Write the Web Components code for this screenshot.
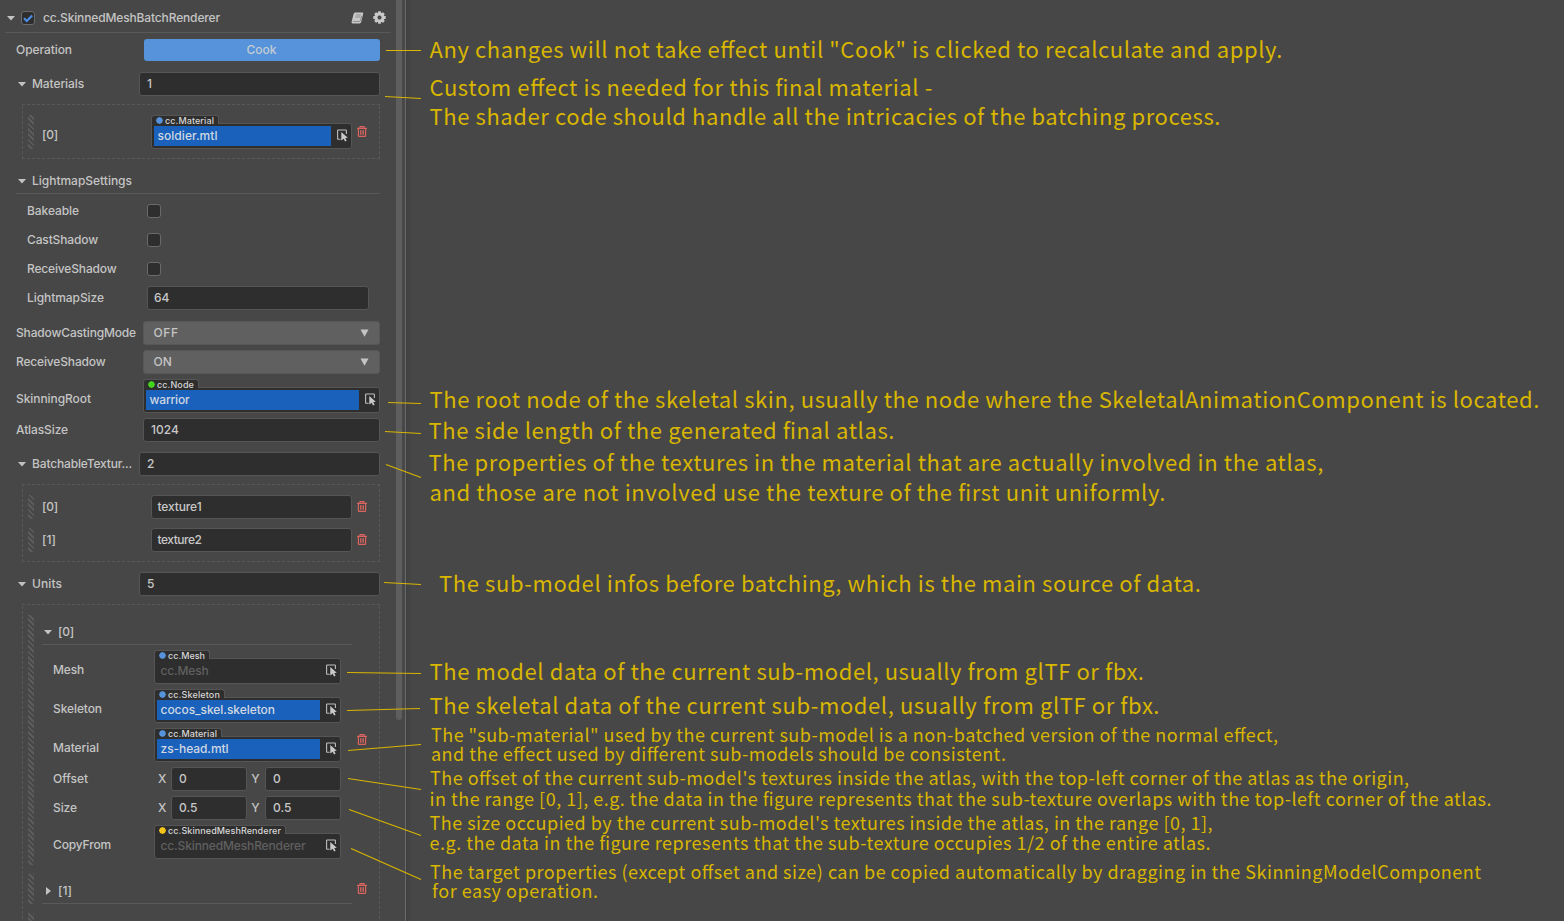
<!DOCTYPE html>
<html lang="en">
<head>
<meta charset="utf-8">
<title>cc.SkinnedMeshBatchRenderer</title>
<style>
html,body{margin:0;background:#474747;overflow:hidden}
body{width:1564px;height:921px;font:450 12px/16px Inter,"Liberation Sans",sans-serif;color:#c4c4c4}
</style>
</head>
<body>
<inspector-page></inspector-page>
<script>
const define = (name, html, setup) => customElements.define(name, class extends HTMLElement {
  connectedCallback() {
    if (this.shadowRoot) return;
    const root = this.attachShadow({mode: 'open'});
    const t = document.createElement('template');
    t.innerHTML = typeof html === 'function' ? html(this) : html;
    root.append(t.content.cloneNode(true));
    if (setup) setup(this, root);
  }
});

/* whole page: inspector on the left, notes on the right, connectors over both */
define('inspector-page', `
<style>
:host{display:flex;position:relative;width:1564px;height:921px;overflow:hidden;background:#474747}
</style>
<inspector-panel></inspector-panel>
<inspector-notes></inspector-notes>
<note-connectors></note-connectors>`);

define('inspector-panel', `
<style>
:host{display:flex;width:406px;height:921px;overflow:hidden;box-sizing:border-box;border-right:1px solid #6a6a6a;flex:none}
main{width:380px;flex:none;box-sizing:border-box}
header{display:flex;align-items:center;height:32px;width:386px;margin-left:5px;box-sizing:content-box;border-bottom:1px solid #595959}
header tri-arrow{margin:3px 5px 0 1px}
header check-box{margin:4px 8px 0 0}
header fit-text{margin-top:3px}
header book-icon{margin:4px 9px 0 auto}
header gear-icon{margin:3px 5px 0 0}
.track{margin-left:16px;width:6px;height:720px;background:#5e5e5e;border-radius:0 0 3px 3px}
.button{height:22px;background:#5693da;border-radius:3px;display:flex;justify-content:center;align-items:center;color:#c3cbd4;margin:0 .5px}
.list{margin:8px 0 0 22px;width:358px;box-sizing:border-box;border:0;
 background:
 repeating-linear-gradient(90deg,#595959 0 3px,transparent 3px 5px) 0 0/100% 1px no-repeat,
 repeating-linear-gradient(90deg,#595959 0 3px,transparent 3px 5px) 0 100%/100% 1px no-repeat,
 repeating-linear-gradient(0deg,#595959 0 3px,transparent 3px 5px) 0 0/1px 100% no-repeat,
 repeating-linear-gradient(0deg,#595959 0 3px,transparent 3px 5px) 100% 0/1px 100% no-repeat;
 display:flex;flex-direction:column}
.item{display:flex}
.unit{width:310px;margin-left:8px}
.rule{height:1px;background:#595959}
</style>
<main>
<header><tri-arrow></tri-arrow><check-box checked></check-box><fit-text w="177">cc.SkinnedMeshBatchRenderer</fit-text><book-icon></book-icon><gear-icon></gear-icon></header>
<prop-row style="--mt:5px" label="Operation" w="56"><div class="button"><fit-text w="30">Cook</fit-text></div></prop-row>
<prop-row style="--mt:10px;--c:139px" arrow label="Materials" w="52"><text-field>1</text-field></prop-row>
<div class="list" style="height:55px">
 <div class="item" style="margin-top:11px"><drag-handle style="--h:34px;margin-left:6px"></drag-handle>
  <prop-row style="--x:8px;--c:117px;--h:34px;--rw:318px;--lt:5px" label="[0]" w="16"><asset-field tag="cc.Material" tw="49" w="60" kind="asset">soldier.mtl</asset-field></prop-row><trash-icon style="margin:11px 0 0 5px"></trash-icon></div>
</div>
<prop-row style="--mt:10px" arrow label="LightmapSettings" w="100"></prop-row>
<div class="rule" style="margin-left:16px"></div>
<prop-row style="--mt:5px;--x:27px;--c:147px" label="Bakeable" w="52"><check-box></check-box></prop-row>
<prop-row style="--mt:5px;--x:27px;--c:147px" label="CastShadow" w="71"><check-box></check-box></prop-row>
<prop-row style="--mt:5px;--x:27px;--c:147px" label="ReceiveShadow" w="89.5"><check-box></check-box></prop-row>
<prop-row style="--mt:5px;--x:27px;--c:147px;--rw:369px" label="LightmapSize" w="77"><text-field style="--pad:6px">64</text-field></prop-row>
<prop-row style="--mt:11px" label="ShadowCastingMode" w="120"><select-field w="25">OFF</select-field></prop-row>
<prop-row style="--mt:5px" label="ReceiveShadow" w="89.5"><select-field w="18.5">ON</select-field></prop-row>
<prop-row style="--mt:5px;--h:34px;--lt:5px" label="SkinningRoot" w="75"><asset-field tag="cc.Node" tw="37" w="40" kind="node">warrior</asset-field></prop-row>
<prop-row style="--mt:5px" label="AtlasSize" w="52"><text-field>1024</text-field></prop-row>
<prop-row style="--mt:10px;--c:139px" arrow label="BatchableTextur..." w="100"><text-field>2</text-field></prop-row>
<div class="list" style="height:78px">
 <div class="item" style="margin-top:11px"><drag-handle style="--h:24px;margin-left:6px"></drag-handle>
  <prop-row style="--x:8px;--c:117px;--rw:318px" label="[0]" w="16"><text-field w="44">texture1</text-field></prop-row><trash-icon style="margin:6px 0 0 5px"></trash-icon></div>
 <div class="item" style="margin-top:9px"><drag-handle style="--h:24px;margin-left:6px"></drag-handle>
  <prop-row style="--x:8px;--c:117px;--rw:318px" label="[1]" w="14"><text-field w="44">texture2</text-field></prop-row><trash-icon style="margin:6px 0 0 5px"></trash-icon></div>
</div>
<prop-row style="--mt:10px;--c:139px" arrow label="Units" w="30"><text-field>5</text-field></prop-row>
<div class="list" style="height:330px">
 <div class="item" style="margin-top:11px"><drag-handle style="--h:250px;margin-left:6px"></drag-handle>
  <div class="unit">
   <prop-row style="--x:0px;--mt:5px" arrow label="[0]" w="16"></prop-row>
   <div class="rule"></div>
   <prop-row style="--mt:5px;--x:11px;--c:112px;--rw:299px;--h:34px;--lt:6px" label="Mesh" w="31"><asset-field empty tag="cc.Mesh" tw="37" w="48" kind="asset">cc.Mesh</asset-field></prop-row>
   <prop-row style="--mt:5px;--x:11px;--c:112px;--rw:299px;--h:34px;--lt:6px" label="Skeleton" w="49"><asset-field tag="cc.Skeleton" tw="52" w="114.5" kind="asset">cocos_skel.skeleton</asset-field></prop-row>
   <prop-row style="--mt:5px;--x:11px;--c:112px;--rw:299px;--h:34px;--lt:6px" label="Material" w="46"><asset-field tag="cc.Material" tw="49" w="68" kind="asset">zs-head.mtl</asset-field></prop-row>
   <prop-row style="--mt:5px;--x:11px;--c:116px;--rw:299px" label="Offset" w="35"><vector-field x="0" y="0"></vector-field></prop-row>
   <prop-row style="--mt:5px;--x:11px;--c:116px;--rw:299px" label="Size" w="24"><vector-field x="0.5" y="0.5"></vector-field></prop-row>
   <prop-row style="--mt:5px;--x:11px;--c:112px;--rw:299px;--h:34px;--lt:6px" label="CopyFrom" w="58"><asset-field empty tag="cc.SkinnedMeshRenderer" tw="113" w="145" kind="component">cc.SkinnedMeshRenderer</asset-field></prop-row>
  </div><trash-icon style="margin:119px 0 0 5px"></trash-icon></div>
 <div class="item" style="margin-top:9px"><drag-handle style="--h:30px;margin-left:6px"></drag-handle>
  <div class="unit"><prop-row style="--x:0px;--mt:5px" arrow closed label="[1]" w="14"></prop-row><div class="rule"></div></div><trash-icon style="margin:9px 0 0 5px"></trash-icon></div>
 <div class="item" style="margin-top:9px"><drag-handle style="--h:20px;margin-left:6px"></drag-handle></div>
</div>
</main>
<div class="track"></div>`);

/* label at --x, control from --c to --rw */
define('prop-row', el => `
<style>
:host{display:grid;grid-template-columns:calc(var(--c,143px) - var(--x,16px)) 1fr;align-items:center;
 box-sizing:border-box;width:var(--rw,380px);height:var(--h,24px);margin-top:var(--mt,0);padding-left:var(--x,16px)}
.label{display:flex;align-items:center;white-space:nowrap;padding-top:var(--lt,0)}
tri-arrow{margin:0 5px 0 1px}
</style>
<div class="label">${el.hasAttribute('arrow') ? `<tri-arrow ${el.hasAttribute('closed') ? 'closed' : ''}></tri-arrow>` : ''}<fit-text w="${el.getAttribute('w')}">${el.getAttribute('label')}</fit-text></div>
<slot></slot>`);

define('text-field', el => `
<style>
:host{display:flex;align-items:center;box-sizing:border-box;height:24px;background:#2e2e2e;border:1px solid #555;border-radius:3px;padding-left:var(--pad,7px);color:#c8c8c8;flex:1;min-width:0}
:host([w]){--pad:5.5px}
</style>
${el.hasAttribute('w') ? `<fit-text w="${el.getAttribute('w')}">${el.textContent}</fit-text>` : '<slot></slot>'}`);

define('vector-field', el => `
<style>
:host{display:flex;align-items:center}
span{width:13px}
span.y{width:9px;margin:0 5px 0 4px;text-align:center}
text-field{flex:1}
</style>
<span>X</span><text-field>${el.getAttribute('x')}</text-field><span class="y">Y</span><text-field>${el.getAttribute('y')}</text-field>`);

define('select-field', el => `
<style>
:host{display:flex;align-items:center;justify-content:space-between;box-sizing:border-box;height:24px;background:#606060;border:1px solid #575757;border-radius:3px;padding:0 10px 0 9.5px}
</style>
<fit-text w="${el.getAttribute('w')}">${el.textContent}</fit-text>
<svg width="9" height="8" viewBox="0 0 9 8"><path d="M.5 .5h8L4.5 7.8z" fill="#c4c4c4"/></svg>`);

define('check-box', el => `
<style>
:host{display:block;box-sizing:border-box;width:14px;height:14px;background:#2e2e2e;border:1px solid #6a6a6a;border-radius:3px}
svg{display:block}
</style>
${el.hasAttribute('checked') ? '<svg width="12" height="12" viewBox="0 0 12 12"><path d="M2 6.2l2.8 2.8L10.2 3.4" fill="none" stroke="#4a8ee6" stroke-width="2.1"/></svg>' : ''}`);

define('tri-arrow', el => `
<style>:host{display:block;width:10px;height:10px;flex:none}svg{display:block}</style>
<svg width="10" height="10" viewBox="0 0 10 10"><path d="${el.hasAttribute('closed') ? 'M3 1L8 5L3 9z' : 'M1 3h8L5 7.5z'}" fill="#c2c2c2"/></svg>`);

define('drag-handle', `
<style>:host{display:block;width:6px;height:var(--h);flex:none;background:repeating-linear-gradient(45deg,#474747 0 1.9px,#5b5b5b 1.9px 3.8px)}</style>`);

/* asset reference: type tag sits on top of the value box */
define('asset-field', el => {
  const colour = {asset: '#5693da', node: '#43d41c', component: '#f5c518'}[el.getAttribute('kind')];
  return `
<style>
:host{display:flex;flex-direction:column;align-items:flex-start;height:34px;width:100%}
.tag{display:flex;align-items:center;box-sizing:border-box;height:9px;background:#2e2e2e;border:1px solid #555;border-bottom:0;border-radius:3px 3px 0 0;font-size:9px;line-height:9px;padding:1px 4px 0 4px;gap:2px;margin-bottom:-1px;z-index:1;color:#d6d6d6}
.box{display:flex;align-items:center;box-sizing:border-box;width:100%;height:26px;background:#2e2e2e;border:1px solid #555;border-radius:0 3px 3px 3px;padding:1px 3px 2px 2px}
.value{flex:1;height:20px;display:flex;align-items:center;padding-left:3.5px;margin-right:6px;background:#1a61bb;color:#d0d8e2}
:host([empty]) .value{background:none;color:#606060}
svg{display:block;flex:none}
</style>
<div class="tag"><svg width="7" height="7" viewBox="0 0 7 7"><path d="M3.5 0L5.9 1.1L7 3.5L5.9 5.9L3.5 7L1.1 5.9L0 3.5L1.1 1.1z" fill="${colour}"/></svg><fit-text w="${el.getAttribute('tw')}">${el.getAttribute('tag')}</fit-text></div>
<div class="box"><div class="value"><fit-text w="${el.getAttribute('w')}">${el.textContent}</fit-text></div>
<svg width="11" height="13" viewBox="0 0 11 13"><path d="M3.6 10.3H1.2Q.6 10.3 .6 9.7V1.6Q.6 1 1.2 1H8.8Q9.4 1 9.4 1.6V5" fill="none" stroke="#bdbdbd" stroke-width="1.1"/><path d="M4.3 2.9L10.8 8.7L8.3 9.1L9.6 11.7L8 12.5L6.8 9.8L4.3 11.5z" fill="#c9c9c9"/></svg></div>`;
});

define('trash-icon', `
<style>:host{display:block;width:10px;height:11px;flex:none}svg{display:block}</style>
<svg width="10" height="11" viewBox="0 0 10 11" fill="none" stroke="#d9655e"><path d="M0 2.4H10M3 2.2V.6H7V2.2" stroke-width="1.1"/><path d="M1.4 2.6V9.8Q1.4 10.4 2 10.4H8Q8.6 10.4 8.6 9.8V2.6" stroke-width="1.2"/><path d="M3.5 4.2V8.8M5 4.2V8.8M6.5 4.2V8.8" stroke-width=".9"/></svg>`);

define('book-icon', `
<style>:host{display:block}svg{display:block}</style>
<svg width="13" height="12" viewBox="0 0 13 12"><path d="M4.3 .6H11.6Q12.5 .6 12.2 1.5L10.2 10Q9.9 11.4 8.6 11.4H1.6Q.2 11.4 .6 9.8L2.7 1.7Q3 .6 4.3 .6z" fill="#c8c8c8"/><path d="M4.8 3H9.9M4.3 5H9.4M1.8 9.4H8.6Q9.3 9.4 9.5 8.6L10.6 4" fill="none" stroke="#777" stroke-width=".7"/></svg>`);

define('gear-icon', () => {
  let teeth = '';
  for (let i = 0; i < 8; i++) teeth += `<rect x="5" y="0.3" width="3" height="4" rx=".6" transform="rotate(${i * 45} 6.5 6.5)"/>`;
  return `<style>:host{display:block}svg{display:block}</style>
<svg width="13" height="13" viewBox="0 0 13 13" fill="#c8c8c8">${teeth}<circle cx="6.5" cy="6.5" r="3.6" fill="none" stroke="#c8c8c8" stroke-width="2.7"/></svg>`;
});

/* notes: left edge, baseline, text width, font size, text */
const NOTES = [
 [430,58,852,22,'Any changes will not take effect until "Cook" is clicked to recalculate and apply.'],
 [430,96,502,22,'Custom effect is needed for this final material -'],
 [430,125,790,22,'The shader code should handle all the intricacies of the batching process.'],
 [430,408,1109,22,'The root node of the skeletal skin, usually the node where the SkeletalAnimationComponent is located.'],
 [429,439,465,22,'The side length of the generated final atlas.'],
 [429,471,894,22,'The properties of the textures in the material that are actually involved in the atlas,'],
 [430,501,735,22,'and those are not involved use the texture of the first unit uniformly.'],
 [439.5,592,761,22,'The sub-model infos before batching, which is the main source of data.'],
 [430,680,713.5,22,'The model data of the current sub-model, usually from glTF or fbx.'],
 [430,714,729,22,'The skeletal data of the current sub-model, usually from glTF or fbx.'],
 [431.5,742,846,18,'The "sub-material" used by the current sub-model is a non-batched version of the normal effect,'],
 [431.5,761,574,18,'and the effect used by different sub-models should be consistent.'],
 [430.5,785,978,18,"The offset of the current sub-model's textures inside the atlas, with the top-left corner of the atlas as the origin,"],
 [430,806,1061,18,'in the range [0, 1], e.g. the data in the figure represents that the sub-texture overlaps with the top-left corner of the atlas.'],
 [430,830,782,18,"The size occupied by the current sub-model's textures inside the atlas, in the range [0, 1],"],
 [430,850,780,18,'e.g. the data in the figure represents that the sub-texture occupies 1/2 of the entire atlas.'],
 [430.5,879,1050,18,'The target properties (except offset and size) can be copied automatically by dragging in the SkinningModelComponent'],
 [432.5,898,165,18,'for easy operation.']
];
define('inspector-notes', () => {
  let bottom = 0, html = '';
  for (const [x, base, w, size, text] of NOTES) {
    const top = base - (size === 22 ? 19 : 17);
    html += `<p style="margin:${top - bottom}px 0 0 ${x - 406 - .5}px;font-size:${size}px"><fit-text w="${w + 1.5}">${text}</fit-text></p>`;
    bottom = top + 18;
  }
  return `<style>
:host{display:flow-root;flex:1;font-family:"Noto Sans CJK SC",sans-serif;font-weight:400;line-height:18px;color:#d9b600;font-feature-settings:"liga" 1;background:linear-gradient(90deg,#404040,#474747 6px)}
p{white-space:nowrap;height:18px}
</style>${html}`;
});

const LINKS = [[386,50.5,421,50.5],[385,96.5,421,98.5],[388,402.5,421,403.5],[385,431.5,421,433.5],[386,464.5,421,477.5],[384,582.5,421,584.5],
 [347,672.5,421,673.5],[347,710.5,420,708.5],[348,750.5,421,744.5],[348,778.5,421,789.5],[349,809.5,421,835.5],[351,848.5,421,879.5]];
define('note-connectors', () => `
<style>:host{position:absolute;inset:0;pointer-events:none}svg{display:block}</style>
<svg width="1564" height="921" stroke="#d9b600" stroke-width="1.1">${LINKS.map(([a,b,c,d]) => `<line x1="${a}" y1="${b}" x2="${c}" y2="${d}"/>`).join('')}</svg>`);

/* text tracked so that it fills the width given in w */
define('fit-text', `
<style>:host{display:inline-block;white-space:nowrap}span{display:inline-block}</style><span><slot></slot></span>`, (el, root) => {
  const want = parseFloat(el.getAttribute('w')), n = el.textContent.length;
  if (!want) return;
  const span = root.querySelector('span');
  let ls = 0;
  for (let i = 0; i < 3; i++) {
    ls += (want - span.getBoundingClientRect().width) / n;
    span.style.letterSpacing = ls.toFixed(3) + 'px';
  }
});
</script>
</body>
</html>
